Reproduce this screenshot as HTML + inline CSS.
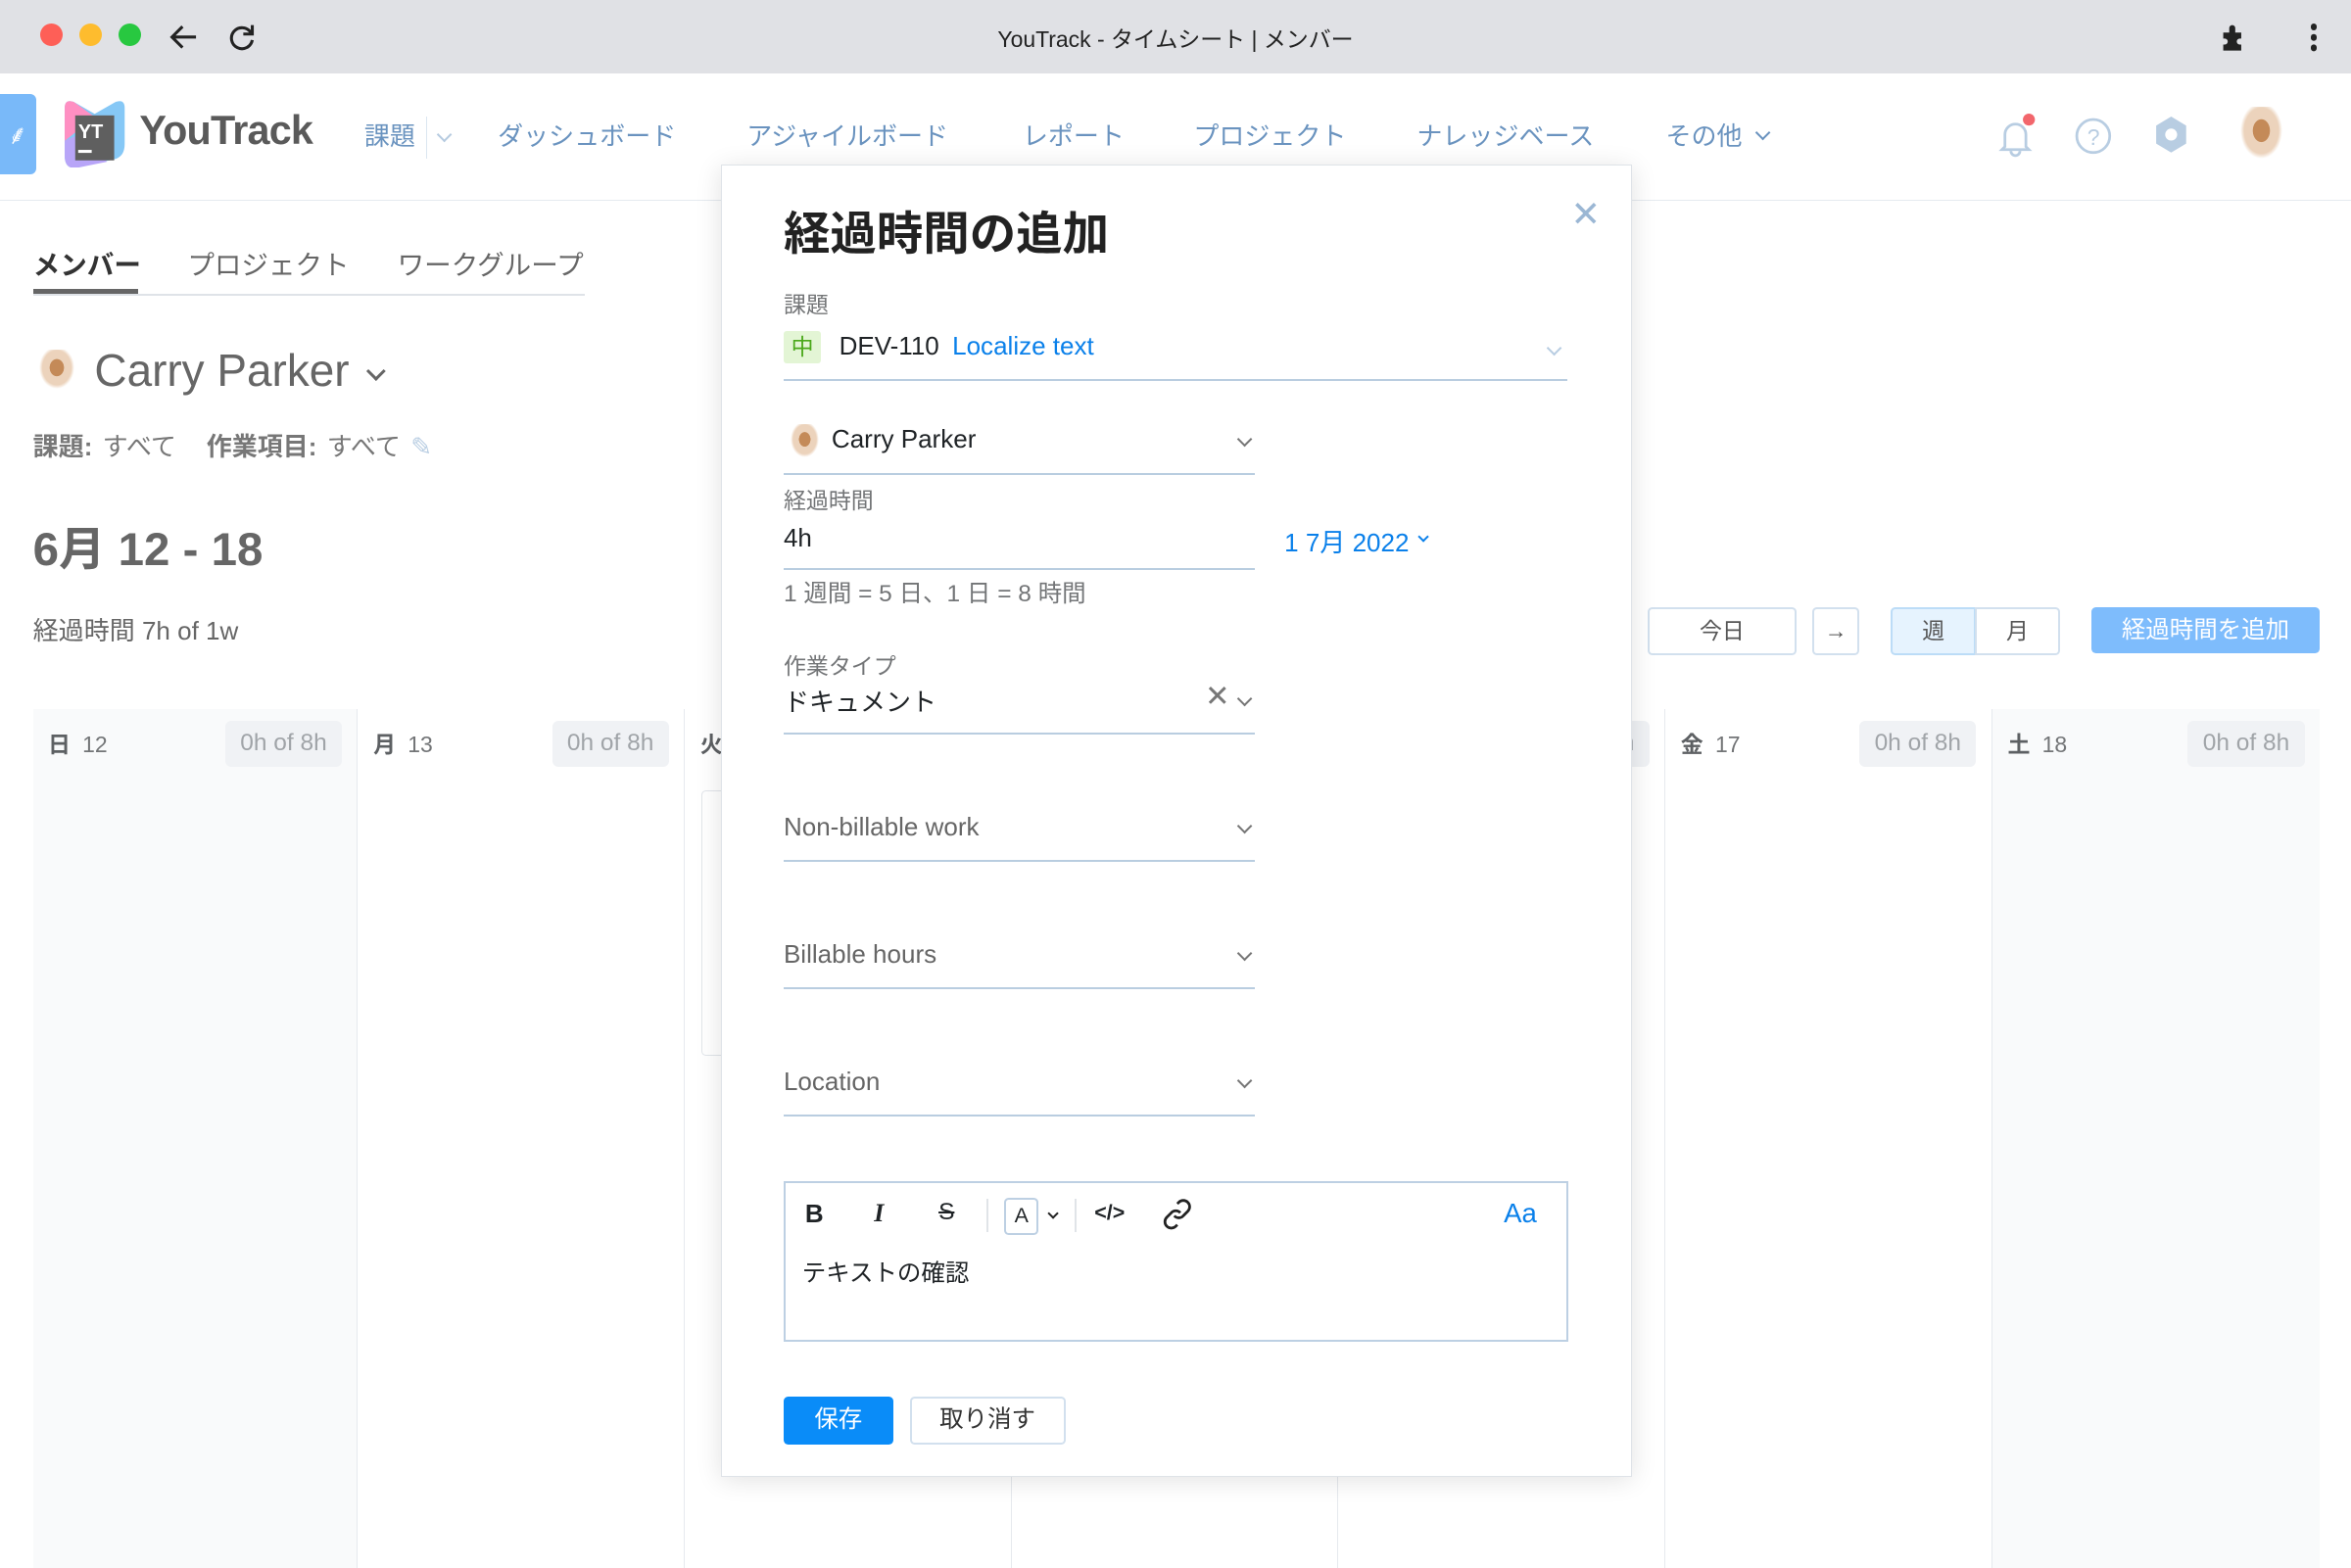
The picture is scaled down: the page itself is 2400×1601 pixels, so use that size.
<!DOCTYPE html>
<html><head><meta charset="utf-8"><style>
html{zoom:1.5306}
body{margin:0;width:1568px;height:1046px;overflow:hidden;background:#fff;font-family:"Liberation Sans","Noto Sans CJK JP",sans-serif;color:#1f2326;position:relative}
.a{position:absolute}
.nav{color:#6a93bf;font-size:17px}
.col{position:absolute;top:473px;height:573px;border-right:1px solid #e6e9ee}
.dh{position:absolute;top:11px;left:10px;font-size:15px;color:#737577}
.dh b{color:#5d6063;margin-right:8px}
.pill{position:absolute;top:8px;right:10px;background:#f0f2f5;color:#a0a4a8;font-size:16px;padding:6px 10px;border-radius:4px}
.lbl{font-size:15px;color:#737577}
.ul{border-bottom:1.5px solid #b9cde0}
.chev{position:absolute;width:6px;height:6px;border-right:1.4px solid #777;border-bottom:1.4px solid #777;transform:rotate(45deg)}
.btn{position:absolute;border:1.5px solid #d2e0ee;border-radius:3px;background:#fff;font-size:15px;color:#555;text-align:center;box-sizing:border-box}
</style></head><body>
<div class="a" style="left:0;top:0;width:1568px;height:49px;background:#e0e1e5"></div>
<div class="a" style="left:27px;top:16px;width:15px;height:15px;border-radius:50%;background:#fe5f57"></div>
<div class="a" style="left:53px;top:16px;width:15px;height:15px;border-radius:50%;background:#febc2e"></div>
<div class="a" style="left:79px;top:16px;width:15px;height:15px;border-radius:50%;background:#28c840"></div>
<svg class="a" style="left:112px;top:14px" width="22" height="22" viewBox="0 0 22 22"><path d="M19 11H4M10 4L3 11l7 7" stroke="#222" stroke-width="2" fill="none"/></svg>
<svg class="a" style="left:150px;top:14px" width="22" height="22" viewBox="0 0 22 22"><path d="M17 8A7 7 0 1 0 18 13" stroke="#222" stroke-width="2" fill="none"/><path d="M18 3v6h-6" stroke="#222" stroke-width="2" fill="none"/></svg>
<div class="a" style="left:0;width:1568px;top:14px;text-align:center;font-size:15px;color:#222">YouTrack - タイムシート | メンバー</div>
<svg class="a" style="left:1480px;top:14px" width="22" height="22" viewBox="0 0 22 22"><path d="M3 8h4V5a2 2 0 0 1 4 0v3h4v4h-1a2 2 0 0 0 0 4h1v4H3v-4h1a2 2 0 0 0 0-4H3z" fill="#222"/></svg>
<div class="a" style="left:1541px;top:16px;width:4px;height:4px;border-radius:2px;background:#222;box-shadow:0 7px 0 #222,0 14px 0 #222"></div>
<div class="a" style="left:0;top:63px;width:24px;height:53px;background:#79b9f9;border-radius:0 4px 4px 0"></div>
<div class="a" style="left:5px;top:78px;color:#fff;font-size:18px">⸙</div>
<svg class="a" style="left:41px;top:66px" width="44" height="46" viewBox="0 0 44 46"><path d="M2 6Q2 0 8 2L22 10 36 2Q42 0 42 6V30Q42 38 36 40L10 46Q2 47 2 38Z" fill="#86c8f6"/><path d="M2 6Q2 0 8 2L22 12 2 28Z" fill="#ff8fc2"/><path d="M2 28L20 20 30 42 10 46Q2 47 2 38Z" fill="#b8a5f8"/><rect x="9" y="11" width="26" height="30" fill="#5f5f5f"/><text x="11" y="26" font-size="13" font-weight="bold" fill="#fff" font-family="Liberation Sans">YT</text><rect x="11" y="34" width="9" height="2" fill="#fff"/></svg>
<div class="a" style="left:93px;top:72px;font-size:27px;font-weight:bold;color:#5a5a5a;letter-spacing:-0.5px">YouTrack</div>
<div class="a nav" style="left:243px;top:78px">課題</div>
<div class="a" style="left:284px;top:78px;width:1px;height:28px;background:#dbe6f0"></div>
<div class="chev" style="left:293px;top:86px;border-color:#b6cbe0"></div>
<div class="a nav" style="left:332px;top:78px">ダッシュボード</div>
<div class="a nav" style="left:498px;top:78px">アジャイルボード</div>
<div class="a nav" style="left:682px;top:78px">レポート</div>
<div class="a nav" style="left:796px;top:78px">プロジェクト</div>
<div class="a nav" style="left:945px;top:78px">ナレッジベース</div>
<div class="a nav" style="left:1111px;top:78px">その他</div>
<div class="chev" style="left:1172px;top:85px;border-color:#6a93bf"></div>
<svg class="a" style="left:1330px;top:76px" width="30" height="30" viewBox="0 0 30 30"><path d="M7 22V14a7 7 0 0 1 14 0v8l2 2H5z M11 25a3 3 0 0 0 6 0" stroke="#b8cde2" stroke-width="1.8" fill="none"/><circle cx="23" cy="4" r="4" fill="#f2666c"/></svg>
<svg class="a" style="left:1383px;top:78px" width="26" height="26" viewBox="0 0 26 26"><circle cx="13" cy="13" r="11" stroke="#b8cde2" stroke-width="1.8" fill="none"/><text x="9" y="19" font-size="15" fill="#b8cde2" font-family="Liberation Sans">?</text></svg>
<svg class="a" style="left:1434px;top:76px" width="28" height="28" viewBox="0 0 28 28"><path d="M14 2l10 6v12l-10 6-10-6V8z" fill="#b8cde2"/><circle cx="14" cy="14" r="4" fill="#fff"/></svg>
<div class="a" style="left:1490px;top:71px;width:36px;height:40px;background:radial-gradient(ellipse at 50% 40%,#c48a58 0 22%,#ecd3bc 23% 45%,#fff 55%)"></div>
<div class="a" style="left:0;top:133px;width:1568px;height:1px;background:#e6ebf0"></div>
<div class="a" style="left:22px;top:162px;font-size:18px;color:#333;font-weight:bold">メンバー</div>
<div class="a" style="left:22px;top:193px;width:70px;height:3px;background:#666"></div>
<div class="a" style="left:125px;top:162px;font-size:18px;color:#666">プロジェクト</div>
<div class="a" style="left:265px;top:162px;font-size:18px;color:#666">ワークグループ</div>
<div class="a" style="left:22px;top:196px;width:368px;height:1px;background:#dfe3e8"></div>
<div class="a" style="left:23px;top:233px;width:30px;height:30px;background:radial-gradient(ellipse at 50% 40%,#c48a58 0 22%,#ecd3bc 23% 45%,#fff 55%)"></div>
<div class="a" style="left:63px;top:229px;font-size:30px;color:#666">Carry Parker</div>
<div class="chev" style="left:246px;top:243px;width:7px;height:7px;border-color:#666;border-width:2px"></div>
<div class="a" style="left:22px;top:285px;font-size:17px;color:#777;word-spacing:2px"><b>課題:</b> すべて &nbsp;&nbsp;<b>作業項目:</b> すべて <span style="color:#b8cde2">✎</span></div>
<div class="a" style="left:22px;top:341px;font-size:31px;font-weight:bold;color:#666">6月 12 - 18</div>
<div class="a" style="left:22px;top:408px;font-size:17px;color:#666">経過時間 7h of 1w</div>
<div class="btn" style="left:1099px;top:405px;width:99px;height:32px;line-height:29px">今日</div>
<div class="btn" style="left:1209px;top:405px;width:31px;height:32px;line-height:29px">→</div>
<div class="btn" style="left:1261px;top:405px;width:57px;height:32px;line-height:29px;background:#e6f3fe;border-color:#bcdcf7;border-radius:3px 0 0 3px">週</div>
<div class="btn" style="left:1317px;top:405px;width:57px;height:32px;line-height:29px;border-radius:0 3px 3px 0">月</div>
<div class="a" style="left:1395px;top:405px;width:152px;height:31px;background:#7ebcfc;border-radius:3px;color:#fff;font-size:16px;text-align:center;line-height:31px">経過時間を追加</div>
<div class="col" style="left:22px;width:216px;background:#f9fafb"><div class="dh"><b>日</b>12</div><div class="pill">0h of 8h</div></div>
<div class="col" style="left:239px;width:217px"><div class="dh"><b>月</b>13</div><div class="pill">0h of 8h</div></div>
<div class="col" style="left:457px;width:217px"><div class="dh"><b>火</b></div><div class="a" style="left:11px;top:54px;width:20px;height:176px;border:1px solid #e1e5ea;border-radius:3px"></div></div>
<div class="col" style="left:675px;width:217px"></div>
<div class="col" style="left:893px;width:217px"><div class="pill">0h of 8h</div></div>
<div class="col" style="left:1111px;width:217px"><div class="dh"><b>金</b>17</div><div class="pill">0h of 8h</div></div>
<div class="col" style="left:1329px;width:218px;background:#f9fafb;border-right:none"><div class="dh"><b>土</b>18</div><div class="pill">0h of 8h</div></div>
<div class="a" style="left:481px;top:110px;width:606px;height:874px;background:#fff;border:1px solid #dfe3e8;box-shadow:0 2px 16px rgba(0,0,0,.12)">
<div class="a" style="left:41px;top:20px;font-size:31px;font-weight:bold;color:#222">経過時間の追加</div>
<div class="a" style="left:566px;top:18px;font-size:24px;color:#9bb7d4">✕</div>
<div class="a lbl" style="left:41px;top:80px">課題</div>
<div class="a" style="left:41px;top:110px;width:25px;height:22px;background:#e3f5d5;border-radius:2px;color:#4aa81a;font-size:15px;text-align:center;line-height:22px">中</div>
<div class="a" style="left:78px;top:110px;font-size:17px">DEV-110 <span style="color:#0a80ea;margin-left:4px">Localize text</span></div>
<div class="chev" style="left:551px;top:118px;border-color:#b8cde2"></div>
<div class="a ul" style="left:41px;top:142px;width:523px"></div>
<div class="a" style="left:43px;top:172px;width:24px;height:26px;background:radial-gradient(ellipse at 50% 40%,#c48a58 0 22%,#ecd3bc 23% 45%,#fff 55%)"></div>
<div class="a" style="left:73px;top:172px;font-size:17px">Carry Parker</div>
<div class="chev" style="left:345px;top:179px"></div>
<div class="a ul" style="left:41px;top:205px;width:314px"></div>
<div class="a lbl" style="left:41px;top:211px">経過時間</div>
<div class="a" style="left:41px;top:238px;font-size:17px">4h</div>
<div class="a" style="left:375px;top:238px;font-size:17px;color:#0a80ea">1 7月 2022</div>
<div class="chev" style="left:465px;top:245px;width:4px;height:4px;border-color:#0a80ea"></div>
<div class="a ul" style="left:41px;top:268px;width:314px"></div>
<div class="a" style="left:41px;top:273px;font-size:16px;color:#737577">1 週間 = 5 日、1 日 = 8 時間</div>
<div class="a lbl" style="left:41px;top:321px">作業タイプ</div>
<div class="a" style="left:41px;top:345px;font-size:17px">ドキュメント</div>
<div class="a" style="left:322px;top:343px;font-size:20px;color:#777">✕</div>
<div class="chev" style="left:345px;top:352px"></div>
<div class="a ul" style="left:41px;top:378px;width:314px"></div>
<div class="a" style="left:41px;top:431px;font-size:17px;color:#666">Non-billable work</div><div class="chev" style="left:345px;top:437px"></div>
<div class="a ul" style="left:41px;top:463px;width:314px"></div>
<div class="a" style="left:41px;top:516px;font-size:17px;color:#666">Billable hours</div><div class="chev" style="left:345px;top:522px"></div>
<div class="a ul" style="left:41px;top:548px;width:314px"></div>
<div class="a" style="left:41px;top:601px;font-size:17px;color:#666">Location</div><div class="chev" style="left:345px;top:607px"></div>
<div class="a ul" style="left:41px;top:633px;width:314px"></div>
<div class="a" style="left:41px;top:677px;width:521px;height:105px;border:1.5px solid #bdd0e3">
 <div class="a" style="left:13px;top:11px;font-size:17px;font-weight:bold">B</div>
 <div class="a" style="left:59px;top:11px;font-size:17px;font-style:italic;font-family:'Liberation Serif',serif;font-weight:bold">I</div>
 <div class="a" style="left:102px;top:11px;font-size:16px;text-decoration:line-through">S</div>
 <div class="a" style="left:134px;top:11px;width:1px;height:22px;background:#e0e4e8"></div>
 <div class="a" style="left:146px;top:10px;width:20px;height:22px;border:1.5px solid #bdd0e3;border-radius:3px;font-size:14px;text-align:center;line-height:22px">A</div>
 <div class="chev" style="left:176px;top:18px;width:4px;height:4px;border-color:#222"></div>
 <div class="a" style="left:193px;top:11px;width:1px;height:22px;background:#e0e4e8"></div>
 <div class="a" style="left:206px;top:12px;font-size:14px;font-weight:bold">&lt;/&gt;</div>
 <svg class="a" style="left:250px;top:10px" width="22" height="22" viewBox="0 0 22 22"><path d="M9 12a4 4 0 0 0 6 0l3-3a4 4 0 0 0-6-6l-1 1M13 10a4 4 0 0 0-6 0l-3 3a4 4 0 0 0 6 6l1-1" stroke="#222" stroke-width="1.8" fill="none"/></svg>
 <div class="a" style="left:479px;top:10px;font-size:18px;color:#0a80ea">Aa</div>
 <div class="a" style="left:11px;top:48px;font-size:16px">テキストの確認</div>
</div>
<div class="a" style="left:41px;top:821px;width:73px;height:32px;background:#0a8cf8;border-radius:3px;color:#fff;font-size:16px;text-align:center;line-height:32px">保存</div>
<div class="btn" style="left:125px;top:821px;width:104px;height:32px;line-height:29px;color:#333;font-size:16px">取り消す</div>
</div>
</body></html>
